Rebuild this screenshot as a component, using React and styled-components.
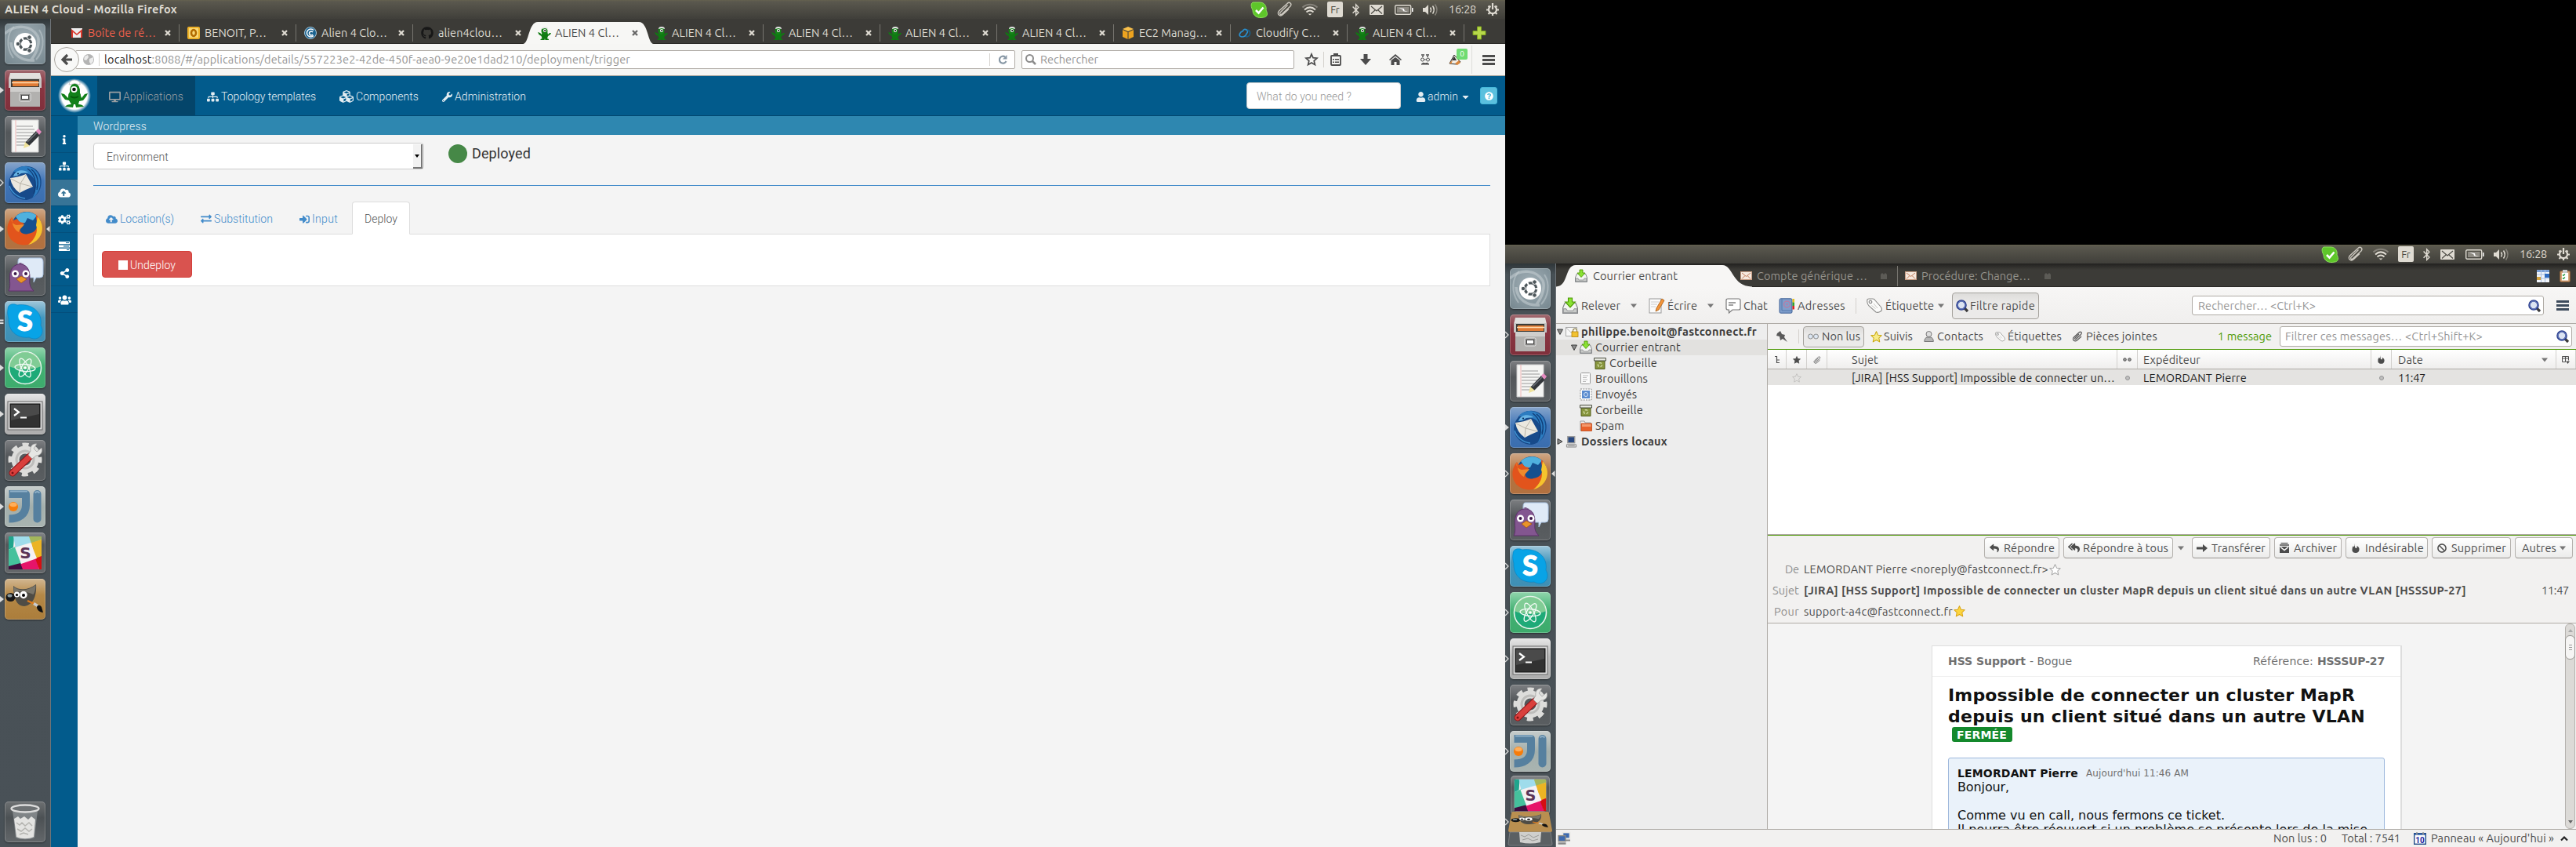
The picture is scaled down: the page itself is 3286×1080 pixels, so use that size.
import React, { useLayoutEffect, useRef, useState } from "react";
import styled, { createGlobalStyle, css } from "styled-components";
import {
  FaSitemap, FaCubes, FaWrench, FaUser, FaCaretDown, FaInfo, FaCloudUploadAlt, FaCogs,
  FaShareAlt, FaUsers, FaExchangeAlt, FaSignInAlt, FaQuestionCircle, FaGithub, FaReply,
  FaReplyAll, FaBan, FaDesktop, FaBluetoothB,
} from "react-icons/fa";

const ubuntu = `Ubuntu, "Noto Sans", "Open Sans", sans-serif`;
const roboto = `Roboto, "Liberation Sans", sans-serif`;
const dejavu = `"DejaVu Sans", Verdana, sans-serif`;

const GlobalStyle = createGlobalStyle`
  html, body { margin: 0; padding: 0; background: #000; overflow: hidden; }
  *, *::before, *::after { box-sizing: border-box; }
`;

/* ---------- shared parts ---------- */

const Label = styled.span`
  display: block;
  flex: none;
  width: ${(p) => p.$w}px;
  margin-left: ${(p) => p.$ml || 0}px;
  line-height: 20px;
  white-space: nowrap;
  ${(p) => p.$c && css`color: ${p.$c};`}
  ${(p) => p.$s && css`font-size: ${p.$s}px;`}
  ${(p) => p.$b && css`font-weight: 700;`}
`;

/* Text that spreads its letters so that it fills the width it is given. */
function Text({ w, ml, c, s, b, children }) {
  const ref = useRef(null);
  const [spacing, setSpacing] = useState(0);
  useLayoutEffect(() => {
    const natural = ref.current.getBoundingClientRect().width;
    setSpacing((w - natural) / String(children).length);
  }, [w, children]);
  return (
    <Label $w={w} $ml={ml} $c={c} $s={s} $b={b}>
      <span ref={ref} style={{ letterSpacing: spacing }}>{children}</span>
    </Label>
  );
}

const Svg = styled.svg`
  display: block;
  flex: none;
  overflow: visible;
  width: ${(p) => p.$w}px;
  height: ${(p) => p.$h || p.$w}px;
  margin-left: ${(p) => p.$ml || 0}px;
`;

const Glyph = styled.span`
  display: flex;
  flex: none;
  align-items: center;
  justify-content: center;
  width: ${(p) => p.$w}px;
  height: 20px;
  margin-left: ${(p) => p.$ml || 0}px;
  font-size: ${(p) => p.$s || p.$w}px;
  color: ${(p) => p.$c || "inherit"};
  svg { flex: none; }
`;

const Divider = styled.span`
  flex: none;
  width: 1px;
  height: ${(p) => p.$h}px;
  margin-left: ${(p) => p.$ml || 0}px;
  background: ${(p) => p.$c || "#d4d1cd"};
`;

const Arrow = ({ ml, w = 8, c = "#777" }) => (
  <Svg $w={w} $h={6} $ml={ml} viewBox="0 0 8 6"><path d="M0 0.5h8L4 5.5z" fill={c} /></Svg>
);

/* ---------- screens and top panel ---------- */

const Desktop = styled.div`
  display: grid;
  grid-template-columns: 1920px 1366px;
  width: 3286px;
  height: 1080px;
  overflow: hidden;
  background: #000;
  font-family: ${ubuntu};
  font-size: 14.5px;
`;

const Screen = styled.section`
  display: flex;
  flex-direction: column;
  height: ${(p) => p.$h}px;
  align-self: end;
  overflow: hidden;
`;

const PanelBar = styled.header`
  display: flex;
  flex: none;
  align-items: center;
  height: 24px;
  padding: 0 8px 0 6px;
  background: linear-gradient(#65624f 0, #5a584e 2px, #403f3a 100%);
  color: #dfdbd2;
`;

const Indicators = styled.div`
  display: flex;
  align-items: center;
  margin-left: auto;
`;

const Keyboard = styled.span`
  display: flex;
  align-items: center;
  justify-content: center;
  width: 20px;
  height: 20px;
  margin-left: 12px;
  border-radius: 2px;
  background: #dfdbd2;
  color: #4c4b45;
  font-size: 13px;
  line-height: 20px;
`;

const ScreenBody = styled.div`
  display: flex;
  flex: 1;
  min-height: 0;
`;

const Panel = ({ title }) => (
  <PanelBar>
    {title && <Text w={220} b>{title}</Text>}
    <Indicators>
      <Svg $w={21} viewBox="0 0 21 21">
        <path d="M2 1h9c6 0 9 5 8 10 3 5 1 9-3 9-8 2-14-2-14-9C0 7-1 3 2 1z" fill="#5ec62a" stroke="#8be05a" strokeWidth="1" />
        <path d="M6 11l3.500 3.500L15.500 7.500" fill="none" stroke="#fff" strokeWidth="2.600" />
      </Svg>
      <Svg $w={20} $ml={12} viewBox="0 0 20 20">
        <path d="M13.500 4.500L4 14c-1.300 1.500.6 3.300 2 2L17 6c2.500-3-1-6.500-4-3.500L2.500 12c-3 4 1 8 5 4.500L15 9.500" fill="none" stroke="#cfcbc2" strokeWidth="1.300" />
      </Svg>
      <Svg $w={20} $h={16} $ml={12} viewBox="0 0 20 16" fill="none" strokeWidth="2">
        <path d="M.5 5.500C6 .5 14 .5 19.500 5.500" stroke="#86837b" />
        <path d="M3 8.500c4.500-4 9.500-4 14 0M5.500 11.500c3-2.600 6-2.600 9 0" stroke="#dfdbd2" />
        <path d="M10 15.500l-2.500-2h5z" fill="#dfdbd2" />
      </Svg>
      <Keyboard>Fr</Keyboard>
      <Glyph $w={9} $ml={12} $s={17}><FaBluetoothB /></Glyph>
      <Svg $w={18} $h={13} $ml={13} viewBox="0 0 18 13">
        <rect width="18" height="13" rx="1" fill="#dfdbd2" />
        <path d="M2 2l7 6 7-6M2 11.500l5-4.500M16 11.500L11 7" fill="none" stroke="#4c4b45" strokeWidth="1.200" />
      </Svg>
      <Svg $w={24} $h={13} $ml={14} viewBox="0 0 24 13">
        <rect x=".7" y=".7" width="20" height="11.600" rx="1.500" fill="none" stroke="#dfdbd2" strokeWidth="1.400" />
        <rect x="3" y="3" width="15.500" height="7" fill="#8d8a82" />
        <path d="M22 4h1.500v5H22zM5 4l7 1 .5 2.500L17 9l-6-.8-.6-2z" fill="#fff" />
      </Svg>
      <Svg $w={19} $h={15} $ml={12} viewBox="0 0 19 15">
        <path d="M0 5h3l4-4v13l-4-4H0z" fill="#dfdbd2" />
        <path d="M9.500 4.500q2 3 0 6M12.500 2.500q3.500 5 0 10" fill="none" stroke="#dfdbd2" strokeWidth="1.500" />
        <path d="M15.500.5q5 7 0 14" fill="none" stroke="#86837b" strokeWidth="1.500" />
      </Svg>
      <Text w={35} ml={14}>16:28</Text>
      <Svg $w={16} $ml={13} viewBox="0 0 16 16" fill="none" stroke="#dfdbd2">
        <path d="M5.500 3.800a5 5 0 1 0 5 0M8 0v8" strokeWidth="2.200" />
        <path d="M2.500 3.500L4 5M13.500 3.500L12 5M0 8.500h3M13 8.500h3M2.500 14L4.500 12M13.500 14l-2-2M8 13v3" strokeWidth="2.200" />
      </Svg>
    </Indicators>
  </PanelBar>
);

/* ---------- launcher ---------- */

const LauncherBar = styled.nav`
  display: flex;
  flex: none;
  flex-direction: column;
  width: 65px;
  padding: 6px 0;
  gap: 7px;
  border-right: 1px solid #6f7478;
  background: linear-gradient(#2f3639 0, #475055 14px, #495157 100%);
`;

const LauncherItem = styled.div`
  display: flex;
  flex: none;
  align-items: center;
  justify-content: space-between;
  height: 52px;
  ${(p) => p.$last && css`margin-top: auto;`}
`;

const Folded = styled.div`
  display: flex;
  flex: none;
  align-items: center;
  height: ${(p) => p.$h}px;
  margin-top: ${(p) => p.$mt}px;
  gap: ${(p) => p.$gap || 0}px;
`;

const Tile = styled.div`
  flex: none;
  width: ${(p) => p.$w || 52}px;
  height: ${(p) => p.$h || 52}px;
  border-radius: 5px;
  background: ${(p) => p.$bg};
  box-shadow: inset 0 0 0 1px rgba(255, 255, 255, 0.22), 0 1px 2px rgba(0, 0, 0, 0.45);
  svg { display: block; width: 100%; height: 100%; }
`;

const Pip = ({ kind, right }) => (
  <Svg $w={6} $h={12} viewBox="0 0 6 12">
    {kind === "solid" && <path d={right ? "M5.500 2v8L1 6z" : "M0 2l5 4-5 4z"} fill="#dcdcdc" />}
    {kind === "open" && <path d="M0 2l4 4-4 4" fill="none" stroke="#dcdcdc" strokeWidth="1.300" />}
    {kind === "many" && <path d="M0 3.500h4.500v2H0zM0 7h4.500v2H0z" fill="#dcdcdc" />}
  </Svg>
);

const GimpArt = () => (
  <g>
    <path d="M11 9c6 6 19 6 29-2 1 14-3 26-15 28-9 0-14-9-14-26z" fill="#4f4c45" />
    <path d="M11.500 10c6 6 18 6 28-2 0 5-1 9-3 12-8-4-18-5-25-2z" fill="#79756a" />
    <ellipse cx="7.500" cy="23.500" rx="6" ry="5.500" fill="#171717" />
    <ellipse cx="6.500" cy="21.500" rx="3" ry="2" fill="#8a9ba0" />
    <circle cx="15.500" cy="20" r="3.500" fill="#fff" /><circle cx="15.500" cy="20.500" r="1.600" />
    <circle cx="24" cy="20.500" r="4.700" fill="#fff" /><circle cx="24" cy="21" r="2" />
    <path d="M29 28l11 5" stroke="#e07b1c" strokeWidth="2.400" />
    <path d="M37 31.500l5 3" stroke="#c9cdd0" strokeWidth="3.500" />
    <path d="M41 36c1-3 4-3 6 0l2 7c-4 0-8-3-8-7z" fill="#111" />
  </g>
);

const TrashArt = () => (
  <g>
    <path d="M10 11l4 35c6 3 18 3 24 0l4-35z" fill="#b8bcbe" opacity=".45" />
    <path d="M12 22l5-3 3 3 5-3 5 4 4-4 5 4-2 22c-6 3-16 3-22 0z" fill="#e3e3e1" />
    <path d="M15 27l4 3 3-3 4 4 5-4 4 4M16 35l5 3 5-4 5 4 4-3M19 42l5-2 6 2" fill="none" stroke="#b4b4b0" strokeWidth="1.500" />
    <ellipse cx="26" cy="9" rx="17.500" ry="4.500" fill="#6e7274" stroke="#dcdcdc" strokeWidth="2.400" />
  </g>
);

const tiles = [
  {
    bg: "radial-gradient(circle at 50% 40%, #a3b1b8, #75868e)",
    art: <g>
      <path d="M0 13C14 0 34 2 42 16c3 7 0 20-8 30M8 24C9 40 22 48 38 47" fill="none" stroke="#c6d0d4" strokeWidth="3.500" opacity=".55" />
      <path d="M12 4C3 12 1 30 11 44M44 8c8 12 5 28-4 38" fill="none" stroke="#c6d0d4" strokeWidth="2" opacity=".5" />
      <circle cx="26" cy="26" r="14" fill="#fff" />
      <circle cx="26.500" cy="26" r="7.200" fill="none" stroke="#4d565a" strokeWidth="3.200" strokeDasharray="13 2.080" strokeDashoffset="-1" />
      <g fill="#4d565a" stroke="#fff" strokeWidth="1"><circle cx="17" cy="26" r="2.800" /><circle cx="31.500" cy="17.600" r="2.800" /><circle cx="31.500" cy="34.400" r="2.800" /></g>
    </g>,
  },
  {
    bg: "linear-gradient(#a06a70, #8b3642 35%, #7f2f3b)",
    art: <g>
      <path d="M7 4h38l2 8H5z" fill="#e1e0de" />
      <path d="M5 11h42v12H5z" fill="#c6c5c3" />
      <path d="M8 12h36v10H8z" fill="#3c3c38" />
      <path d="M10 14h33v7H10z" fill="#e07b35" /><path d="M9 16.500h35" stroke="#ffd9ae" strokeWidth="1.500" />
      <path d="M7 22h38v25H7z" fill="#b2b1af" /><path d="M7 22h38v6H7z" fill="#cfcecc" />
      <rect x="19" y="30" width="14" height="10" rx="1.500" fill="#8e8d8b" stroke="#e8e8e8" />
      <rect x="21.500" y="32.500" width="9" height="5" fill="#fff" stroke="#444" />
    </g>,
  },
  {
    bg: "linear-gradient(#7d7f82, #53575a 40%, #5c6063)",
    art: <g>
      <path d="M9 5h34v41H9z" fill="#f5f5f3" stroke="#ccc" />
      <path d="M14 5v41" stroke="#f0b6b6" />
      <path d="M15 13h21M15 17h23M15 21h22M15 25h23M15 29h20M15 33h17M15 37h13" stroke="#9a9a9a" />
      <path d="M26 34l14-15 5 5-14 14z" fill="#33363a" /><path d="M29 33l13-13" stroke="#6c7076" strokeWidth="1.500" />
      <path d="M26 33l6 5-8 3z" fill="#efe29a" /><path d="M40 19l3-3 4 4-3 4z" fill="#e58bc0" />
    </g>,
  },
  {
    bg: "linear-gradient(#87a5cb, #4176b8 45%, #3a6dae)",
    art: <g>
      <path d="M10 14C17 2 38 1 45 16c5 13-1 29-17 32-10 0-19-6-22-15-2-7 0-14 4-19z" fill="#174a8a" />
      <path d="M11 12C20 1 37 4 43 15c5 11 2 24-8 31 6-9 6-21 0-28-5-5-13-6-24-6z" fill="#2c7cc0" />
      <path d="M34 9c8 6 10 16 7 26M29 8c9 6 13 18 8 32M38 13c5 7 5 14 3 20" fill="none" stroke="#103d77" strokeWidth="1.300" />
      <path d="M7 20q11-1 20-5l9 16q-10 4-17 8Q9 32 7 20z" fill="#ebe8df" />
      <path d="M8 21l12 6 7-11M20 27l-1 11M20 27l15 4" fill="none" stroke="#b9b5a9" />
      <path d="M6 30c3 9 11 15 20 16" fill="none" stroke="#3f90d0" strokeWidth="1.500" />
      <path d="M11 18c2-8 12-10 19-5l-9 1-5 3z" fill="#68b4e4" /><circle cx="17" cy="14.500" r="1.100" fill="#062b55" />
    </g>,
  },
  {
    bg: "linear-gradient(#cfa887, #b2733f 45%, #b27140)",
    art: <g>
      <circle cx="28" cy="23" r="19" fill="#15508f" />
      <path d="M14 10c7-7 19-8 27-1l-5 6-7-3-3 6-6 1z" fill="#4fb1de" />
      <path d="M40 8c8 7 9 19 4 28-9 14-29 13-37 2-6-9-4-20 2-27l2 4 5-2c2 4 5 5 9 5l-5 5c-3 7 4 11 10 9 9-1 13-8 11-15-1-4-1-6-1-9z" fill="#e2541c" />
      <path d="M42 10c7 8 8 19 2 27-4 5-9 8-14 9 9-7 13-17 10-25z" fill="#f6c32d" />
      <path d="M9 11c-2 6 2 9 6 10l10-1c-2 4-6 5-7 10-5-2-9-9-9-19z" fill="#f08a2c" />
    </g>,
  },
  {
    bg: "linear-gradient(#7d7f82, #53575a 40%, #5a5e61)",
    art: <g>
      <path d="M20 4h25q4 0 4 5v16q0 4-4 4h-5l-3 6v-6H23q-6-1-6-6V9q0-5 3-5z" fill="#dfeaf7" stroke="#a9c3e3" />
      <path d="M5 46c4-8-1-17 3-26C12 9 28 9 31 21c3 10-3 16 6 25z" fill="#835690" stroke="#5c3169" />
      <path d="M17 11l8 1-5-2z" fill="#5c3169" />
      <circle cx="13.500" cy="24" r="4.500" fill="#fff" /><circle cx="27" cy="24" r="4.500" fill="#fff" />
      <circle cx="13.500" cy="24" r="2" fill="#3c1849" /><circle cx="27" cy="24" r="2" fill="#3c1849" />
      <path d="M15 31l6-4 7 4-7 5z" fill="#ea9428" stroke="#9c5310" strokeWidth=".7" />
    </g>,
  },
  {
    bg: "linear-gradient(#a0c7da, #4397bd 40%, #3f8fb4)",
    art: <g>
      <path d="M4 10C4 3 12 3 16 5c18-3 33 9 30 26 4 6 2 16-7 17-4 0-6-1-8-2C16 48 4 38 5 22c-1-3-2-7-1-12z" fill="#08a3e6" stroke="#067fc0" strokeWidth=".6" />
      <text x="26" y="38" textAnchor="middle" fontFamily="Lato, sans-serif" fontWeight="900" fontSize="36" fill="#fff" stroke="#fff">S</text>
    </g>,
  },
  {
    bg: "linear-gradient(#91d5ac, #41b072 45%, #3dab6c)",
    art: <g>
      <circle cx="26" cy="26" r="20.500" fill="#1eaa78" stroke="#e8f5ee" strokeWidth="1.600" />
      <path d="M6 24C8 0 44 0 46 24c-10 5-30 5-40 0z" fill="#b5dfa4" opacity=".65" />
      <g fill="none" stroke="#f2fbf6" strokeWidth="1.300">
        <ellipse cx="26" cy="26" rx="13" ry="4.500" transform="rotate(5 26 26)" />
        <ellipse cx="26" cy="26" rx="13" ry="4.500" transform="rotate(63 26 26)" />
        <ellipse cx="26" cy="26" rx="13" ry="4.500" transform="rotate(122 26 26)" />
      </g>
      <circle cx="26" cy="26" r="1.800" fill="#fff" />
    </g>,
  },
  {
    bg: "linear-gradient(#e6e6e6, #b9b9b9 45%, #adadad)",
    art: <g>
      <rect x="4" y="10" width="44" height="36" fill="#dedede" stroke="#777" strokeWidth="1.200" />
      <rect x="7" y="13" width="38" height="30" fill="#313131" stroke="#111" />
      <path d="M8 14h36v12L8 34z" fill="#4a4a4a" />
      <path d="M12 19l6 4.500-6 4.500" fill="none" stroke="#fff" strokeWidth="2.200" /><path d="M20 30.500h8" stroke="#fff" strokeWidth="2" />
    </g>,
  },
  {
    bg: "linear-gradient(#7d7f82, #53575a 40%, #5a5e61)",
    art: <g>
      <circle cx="26" cy="25" r="12.500" fill="none" stroke="#dddddb" strokeWidth="10" />
      <circle cx="26" cy="25" r="19" fill="none" stroke="#dddddb" strokeWidth="5" strokeDasharray="8 6.920" strokeDashoffset="4" />
      <circle cx="26" cy="25" r="11" fill="none" stroke="#bdbdbb" strokeWidth="3" />
      <path d="M10 42l22-21" stroke="#8f1318" strokeWidth="9" strokeLinecap="round" />
      <path d="M10 42l22-21" stroke="#d93f3c" strokeWidth="7" strokeLinecap="round" />
      <circle cx="10" cy="42" r="1.500" fill="#7c1014" />
      <path d="M30 19l5 5 5-4c6 0 9-5 7-10l-6 5-4-4 4-6c-6-1-9 4-8 9z" fill="#e6e6e4" stroke="#999" strokeWidth=".7" />
    </g>,
  },
  {
    bg: "linear-gradient(#c7cdcc, #a3afac 50%, #a9b4b1)",
    art: <g>
      <g fill="none" stroke="#56809f" strokeWidth="10">
        <path d="M5.500 10H27V24C27 36 18 41.500 5.500 41.500" strokeLinejoin="round" />
        <path d="M41.500 10v31.500" strokeLinecap="round" />
      </g>
      <path d="M7 6.500h22M38.500 8.500q3-3 6 0" fill="none" stroke="#8fb0c8" strokeWidth="1.800" />
      <circle cx="11" cy="26" r="6" fill="#f77c0a" /><ellipse cx="11" cy="23.500" rx="4.500" ry="2.800" fill="#ffae5a" />
    </g>,
  },
  {
    bg: "linear-gradient(#85878a, #53575a 30%, #65686b)",
    art: <g>
      <rect x="5" y="5" width="42" height="42" rx="2" fill="#f3eef0" />
      <path d="M5 5h7l-1 14-6 3z" fill="#20a58d" />
      <path d="M11 5h21l2 9-20 6z" fill="#9fdceb" /><path d="M31 5h16v4l-13 5z" fill="#a3b75b" />
      <path d="M34 13l13-4v22l-8 2z" fill="#ecb424" /><path d="M5 22l9-4 8 22-17 6z" fill="#45c19c" />
      <path d="M20 40l20-8 4 15H22z" fill="#e61469" /><path d="M39 33l8-3v17h-3z" fill="#d60f12" /><path d="M5 43l15-4 3 8H5z" fill="#3f0e3f" />
      <path d="M13 19l20-6 8 20-20 7z" fill="#f5f1f3" />
      <text x="26.500" y="33" textAnchor="middle" fontFamily="DejaVu Sans, sans-serif" fontWeight="700" fontSize="20" fill="#5b3558">S</text>
    </g>,
  },
  { bg: "linear-gradient(#d2b792, #b58846 40%, #ab7d3b)", art: <GimpArt /> },
];

const AppTile = ({ n, w, h }) => (
  <Tile $bg={tiles[n].bg} $w={w} $h={h}>
    <svg viewBox="0 0 52 52" preserveAspectRatio="none">{tiles[n].art}</svg>
  </Tile>
);

const trashBg = "linear-gradient(#6d7072, #4c5154 40%, #63676a)";

function Launcher({ pips, folded }) {
  const full = folded ? tiles.slice(0, 11) : tiles;
  return (
    <LauncherBar>
      {full.map((_, n) => (
        <LauncherItem key={n}>
          <Pip kind={pips[n]} />
          <AppTile n={n} />
          <Pip kind={n === 4 ? "solid" : ""} right />
        </LauncherItem>
      ))}
      {folded ? (
        <>
          <Folded $h={50} $mt={-2} $gap={1}><Pip /><AppTile n={11} w={50} h={50} /></Folded>
          <Folded $h={26} $mt={-11}>
            <Pip kind="open" />
            <Svg $w={56} $h={26} $ml={-2} viewBox="0 0 56 26">
              <path d="M6 0h44q2 0 2 2l4 22q0 2-2 2H2q-2 0-2-2L4 2q0-2 2-2z" fill="#b98f50" />
              <g transform="translate(2 0) scale(1 .46)"><GimpArt /></g>
            </Svg>
          </Folded>
          <Folded $h={17} $mt={-7}>
            <Svg $w={56} $h={17} $ml={4} viewBox="0 0 56 17">
              <path d="M2 0h52l2 15q0 2-2 2H2q-2 0-2-2z" fill="#5b6063" stroke="#8a8e90" strokeWidth=".7" />
              <path d="M14 0h28l-1 13q-13 3-26 0z" fill="#cfcfcd" />
              <path d="M16 4l5 2 5-3 6 4 7-3M18 10l7-2 6 3 7-2" fill="none" stroke="#9b9b98" />
            </Svg>
          </Folded>
        </>
      ) : (
        <LauncherItem $last>
          <Pip />
          <Tile $bg={trashBg}><svg viewBox="0 0 52 52"><TrashArt /></svg></Tile>
          <Pip />
        </LauncherItem>
      )}
    </LauncherBar>
  );
}

/* ---------- browser chrome ---------- */

const Window = styled.main`
  display: flex;
  flex: 1;
  flex-direction: column;
  min-width: 0;
`;

const TabStrip = styled.div`
  display: flex;
  flex: none;
  height: 32px;
  padding-left: 15px;
  border-bottom: 1px solid #2a2926;
  background: #3c3b37;
  color: #dfdbd2;
`;

const BrowserTab = styled.div`
  position: relative;
  display: flex;
  flex: none;
  align-items: center;
  width: 149px;
  padding: 5px 0 0 10px;
  ${(p) => p.$active && css`color: #4c4c4c; z-index: 1;`}
  ${(p) => p.$line && css`
    background: linear-gradient(#77756f, #77756f) 100% 7px / 1px 22px no-repeat;
  `}
`;

const TabShape = styled.svg`
  position: absolute;
  left: -9px;
  top: 4px;
  width: 167px;
  height: 28px;
  z-index: -1;
`;

const AlienBody = () => (
  <g>
    <path d="M0 7l3 1 2 2 1-4q4-3 6 0l1 4 2-2 2 0-1 2-3 2-1 3 2 1v1H9.500l-.5-2-.5 2H3.500v-1l2-1-1-3-3-2z" fill="#0f7a12" />
    <ellipse cx="8.500" cy="5.500" rx="4" ry="4.500" fill="#158218" />
    <path d="M5 3q0-3 4-3t4 3l-4-1z" fill="#e9e9e9" />
    <circle cx="9" cy="5" r="2" fill="#fff" /><circle cx="9.200" cy="5" r="1.100" fill="#111" />
  </g>
);

const favicons = {
  gmail: <g><path d="M1 2h14v12H1z" fill="#eee" /><path d="M1 14V3l7 6 7-6v11h-2V7l-5 4-5-4v7z" fill="#d9372b" /></g>,
  outlook: <g><rect width="16" height="16" rx="2" fill="#efb229" /><rect x="2" y="2" width="12" height="12" fill="#f9d977" /><ellipse cx="8" cy="8" rx="3" ry="4" fill="none" stroke="#b26a00" strokeWidth="2.500" /></g>,
  cfy: <g><circle cx="8" cy="8" r="7.500" fill="#1b6390" stroke="#a8c7da" /><path d="M12 4.500a5 5 0 1 0 0 7M11 7a2.500 2.500 0 1 0 0 3" fill="none" stroke="#fff" strokeWidth="1.500" /></g>,
  alien: <AlienBody />,
  cube: <g><path d="M8 0l7 3-7 3-7-3z" fill="#fac14b" /><path d="M1 4l6.500 3v9L1 13zM15 4L8.500 7v9l6.500-3z" fill="#eda31f" /></g>,
  cloud: <g fill="none" strokeWidth="1.700"><path d="M4 13q-4-1-2.500-4T5 6q2-4 5-2t0 5q-1 4-6 4z" stroke="#2a8fce" /><path d="M11 4q4 1 3.500 5T9 13" stroke="#1b5e88" /></g>,
};

const tabs = [
  ["gmail", "Boîte de ré…", 87, "#ec5f4c"],
  ["outlook", "BENOIT, P…", 79],
  ["cfy", "Alien 4 Clo…", 84],
  ["github", "alien4clou…", 82],
  ["alien", "ALIEN 4 Cl…", 82],
  ["alien", "ALIEN 4 Cl…", 82],
  ["alien", "ALIEN 4 Cl…", 82],
  ["alien", "ALIEN 4 Cl…", 82],
  ["alien", "ALIEN 4 Cl…", 82],
  ["cube", "EC2 Manag…", 87],
  ["cloud", "Cloudify C…", 82],
  ["alien", "ALIEN 4 Cl…", 82],
];

const Toolbar = styled.div`
  display: flex;
  flex: none;
  align-items: center;
  height: 41px;
  padding-left: 4px;
  border-bottom: 1px solid #a9a49c;
  background: #f6f6f4;
  color: #4c4c4c;
`;

const BackButton = styled.div`
  z-index: 1;
  display: flex;
  align-items: center;
  justify-content: center;
  flex: none;
  width: 32px;
  height: 32px;
  border: 1px solid #aaa69f;
  border-radius: 50%;
  background: #f8f8f7;
`;

const Field = styled.div`
  display: flex;
  flex: none;
  align-items: center;
  width: ${(p) => p.$w}px;
  height: ${(p) => p.$h || 24}px;
  margin-left: ${(p) => p.$ml || 0}px;
  padding-left: ${(p) => p.$pl || 0}px;
  border: 1px solid #afaba5;
  border-radius: ${(p) => p.$r || 2}px;
  background: #fff;
  color: #969696;
`;

const Url = styled.span`
  b { font-weight: 400; color: #222; }
`;

const BadgeIcon = styled.div`
  position: relative;
  flex: none;
  width: 16px;
  height: 16px;
  margin-left: 23px;
`;

const Badge = styled.span`
  position: absolute;
  left: 10px;
  top: -6px;
  width: 14px;
  height: 14px;
  border-radius: 2px;
  background: #6fdc72;
  color: #fff;
  font-size: 10px;
  line-height: 14px;
  text-align: center;
`;

function UrlText() {
  const ref = useRef(null);
  const [spacing, setSpacing] = useState(0);
  useLayoutEffect(() => {
    setSpacing((671 - ref.current.getBoundingClientRect().width) / ref.current.textContent.length);
  }, []);
  return (
    <Label $w={671} $ml={6}>
      <Url ref={ref} style={{ letterSpacing: spacing }}>
        <b>localhost</b>:8088/#/applications/details/557223e2-42de-450f-aea0-9e20e1dad210/deployment/trigger
      </Url>
    </Label>
  );
}

function BrowserTabs() {
  return (
    <TabStrip>
      {tabs.map(([icon, text, w, color], i) => (
        <BrowserTab key={i} $active={i === 4} $line={i !== 3 && i !== 4}>
          {i === 4 && (
            <TabShape viewBox="0 0 167 28"><path d="M0 28C8 28 7 0 19 0H148C160 0 159 28 167 28z" fill="#f7f7f5" /></TabShape>
          )}
          {icon === "github"
            ? <Glyph $w={16} $c="#171717"><FaGithub /></Glyph>
            : <Svg $w={16} viewBox="0 0 16 16">{favicons[icon]}</Svg>}
          <Text w={w} ml={6} c={color}>{text}</Text>
          <Svg $w={8} $ml={98 - w} viewBox="0 0 8 8">
            <path d="M1 1l6 6M7 1L1 7" stroke={i === 4 ? "#666" : "#dfdbd2"} strokeWidth="2.300" />
          </Svg>
        </BrowserTab>
      ))}
      <Svg $w={16} $h={31} $ml={11} viewBox="0 -10 16 31"><path d="M5.500 0h5v5.500H16v5h-5.500V16h-5v-5.500H0v-5h5.500z" fill="#b7d84a" stroke="#7fa51e" /></Svg>
    </TabStrip>
  );
}

const BrowserToolbar = () => (
  <Toolbar>
    <BackButton>
      <Svg $w={16} viewBox="0 0 16 16"><path d="M15 8H4M9 2L3 8l6 6" fill="none" stroke="#4c4c4c" strokeWidth="3.200" /></Svg>
    </BackButton>
    <Field $w={1199} $ml={-5} $pl={9}>
      <Svg $w={14} viewBox="0 0 14 14">
        <circle cx="7" cy="7" r="7" fill="#b4b4b4" /><path d="M2 3l4-2 1 3-3 4-3-1zM8 6l5-2v5l-3 4-2-3z" fill="#fff" opacity=".75" />
      </Svg>
      <Divider $h={16} $ml={6} />
      <UrlText />
      <Divider $h={16} $ml={458} />
      <Svg $w={12} $ml={10} viewBox="0 0 12 12"><path d="M9 2.500A4.500 4.500 0 1 0 10.500 8" fill="none" stroke="#8797a5" strokeWidth="2.200" /><path d="M11.500 0v5.500H6z" fill="#8797a5" /></Svg>
    </Field>
    <Field $w={348} $ml={8} $pl={4}>
      <Svg $w={14} viewBox="0 0 14 14"><circle cx="5.500" cy="5.500" r="4.500" fill="none" stroke="#8c8c8c" strokeWidth="2" /><path d="M9 9l4 4" stroke="#8c8c8c" strokeWidth="2.500" /></Svg>
      <Text w={74} ml={5}>Rechercher</Text>
    </Field>
    <Svg $w={16} $ml={14} viewBox="0 0 16 16"><path d="M8 1l2 4.700 5 .5-3.800 3.300 1.200 5L8 12l-4.400 2.500 1.200-5L1 6.200l5-.5z" fill="none" stroke="#4c4c4c" strokeWidth="1.700" /></Svg>
    <Divider $h={20} $ml={7} />
    <Svg $w={14} $h={16} $ml={8} viewBox="0 0 14 16"><rect x="1" y="3" width="12" height="12" rx="1" fill="none" stroke="#4c4c4c" strokeWidth="1.800" /><path d="M4 0h6v4H4zM3 7h2v1.500H3zM3 10.500h2V12H3zM6 7h5v1.500H6zM6 10.500h5V12H6z" fill="#4c4c4c" /></Svg>
    <Svg $w={14} $ml={24} viewBox="0 0 14 14"><path d="M4.500 0h5v6H14l-7 8-7-8h4.500z" fill="#4c4c4c" /></Svg>
    <Svg $w={16} $h={14} $ml={23} viewBox="0 0 16 14"><path d="M0 7l8-7 8 7-1 1-7-5.500L1 8zM2.500 8L8 4l5.500 4v6h-4v-4h-3v4h-4z" fill="#4c4c4c" /></Svg>
    <Svg $w={14} $ml={23} viewBox="0 0 14 14">
      <path d="M2 1h4M8 1h4M3 3h2M9 3h2" stroke="#4c4c4c" strokeWidth="1.400" />
      <circle cx="3.500" cy="7" r="2" fill="none" stroke="#4c4c4c" /><circle cx="10.500" cy="7" r="2" fill="none" stroke="#4c4c4c" />
      <path d="M5.500 7h3M2 13q2.500-3 5-1 2.500-2 5 1z" stroke="#4c4c4c" fill="#4c4c4c" />
    </Svg>
    <BadgeIcon>
      <Svg $w={16} viewBox="0 0 16 16"><path d="M1 13L7 2l8 9-5 3z" fill="#f4eee4" stroke="#2d2d2d" /><path d="M4 9l3-5 3 5z" fill="#333" /><path d="M8 13l5-4 2 3-4 3zM1 12l4-3-2 5z" fill="#dc873c" /></Svg>
      <Badge>0</Badge>
    </BadgeIcon>
    <Divider $h={36} $ml={13} $c="#deddda" />
    <Svg $w={16} $h={13} $ml={13} viewBox="0 0 16 13"><path d="M0 1.500h16M0 6.500h16M0 11.500h16" stroke="#4c4c4c" strokeWidth="3" /></Svg>
  </Toolbar>
);

/* ---------- web application ---------- */

const AppHeader = styled.div`
  display: flex;
  flex: none;
  align-items: center;
  height: 51px;
  border-bottom: 1px solid #024770;
  background: #025b8c;
  color: #e4edf2;
  font: 300 14px ${roboto};
`;

const LogoBox = styled.div`
  display: flex;
  align-items: center;
  justify-content: center;
  flex: none;
  width: 59px;
  height: 50px;
`;

const MenuEntry = styled.div`
  display: flex;
  flex: none;
  align-items: center;
  height: 50px;
  padding: 2px 15px 0;
  ${(p) => p.$active && css`
    background: #04456a;
    color: #9a9fa2;
  `}
`;

const SearchBox = styled.div`
  display: flex;
  flex: none;
  align-items: center;
  width: 197px;
  height: 34px;
  margin-left: auto;
  padding: 1px 0 0 12px;
  border: 1px solid #ccc;
  border-radius: 4px;
  background: #fff;
  color: #999;
`;

const UserMenu = styled.div`
  display: flex;
  align-items: center;
  padding: 2px 0 0 20px;
`;

const HelpButton = styled.div`
  display: flex;
  flex: none;
  align-items: center;
  justify-content: center;
  width: 22px;
  height: 22px;
  margin: 0 10px 0 15px;
  border: 1px solid #46b8da;
  border-radius: 3px;
  background: #5bc0de;
  color: #fff;
  font-size: 11px;
`;

const AppBody = styled.div`
  display: flex;
  flex: 1;
  min-height: 0;
  background: #f4f4f4;
  font: 300 14px ${roboto};
`;

const SideNav = styled.div`
  flex: none;
  width: 34px;
  padding-top: 13px;
  background: #025b8c;
`;

const SideItem = styled.div`
  display: flex;
  align-items: center;
  justify-content: center;
  height: 34px;
  padding-top: 1px;
  border-bottom: 1px solid #034f7c;
  background: ${(p) => (p.$active ? "#377497" : "transparent")};
  color: #fff;
  font-size: ${(p) => p.$s || 14}px;
`;

const Page = styled.div`
  flex: 1;
  min-width: 0;
`;

const Crumb = styled.div`
  display: flex;
  align-items: center;
  height: 24px;
  padding: 2px 0 0 20px;
  background: #2e87b0;
  color: #e4edf2;
`;

const Content = styled.div`
  padding: 10px 19px 0 20px;
`;

const StatusRow = styled.div`
  display: flex;
  align-items: flex-start;
  height: 55px;
  border-bottom: 1px solid #428bca;
`;

const Select = styled.div`
  display: flex;
  align-items: center;
  justify-content: space-between;
  width: 422px;
  height: 34px;
  padding: 1px 1px 0 16px;
  border: 1px solid #ccc;
  border-radius: 4px;
  background: #fff;
  color: #555;
`;

const SelectKnob = styled.div`
  display: flex;
  align-items: center;
  justify-content: center;
  width: 12px;
  height: 31px;
  border-right: 2px solid #777;
  border-bottom: 2px solid #777;
  background: #f2f2f2;
`;

const Status = styled.div`
  display: flex;
  align-items: center;
  height: 24px;
  margin: 2px 0 0 31px;
  font-weight: 400;
  font-size: 18px;
  color: #333;
`;

const Dot = styled.span`
  width: 24px;
  height: 24px;
  margin-right: 6px;
  border-radius: 50%;
  background: #468847;
`;

const StepTabs = styled.div`
  display: flex;
  height: 42px;
  margin: 20px 0 -1px;
`;

const StepTab = styled.div`
  display: flex;
  align-items: center;
  margin-right: 2px;
  padding: 2px 15px 0;
  border: 1px solid transparent;
  border-radius: 4px 4px 0 0;
  color: #428bca;
  ${(p) => p.$active && css`
    position: relative;
    border-color: #ddd #ddd #fff;
    background: #fff;
    color: #555;
  `}
`;

const StepPanel = styled.div`
  height: 67px;
  padding: 21px 10px;
  border: 1px solid #ddd;
  background: #fff;
`;

const DangerButton = styled.div`
  display: flex;
  align-items: center;
  width: 115px;
  height: 34px;
  padding: 2px 0 0 20px;
  border: 1px solid #d43f3a;
  border-radius: 4px;
  background: #d9534f;
  color: #fff;
`;

const StopSquare = styled.span`
  width: 12px;
  height: 12px;
  background: #fff;
`;

const Logo = () => (
  <Svg $w={42} $h={44} viewBox="0 0 42 44">
    <defs>
      <radialGradient id="glow"><stop offset=".78" stopColor="#fff" /><stop offset="1" stopColor="#fff" stopOpacity="0" /></radialGradient>
    </defs>
    <ellipse cx="21" cy="22" rx="21" ry="22" fill="url(#glow)" />
    <path d="M4 19l4 1 5 5 2-6q-1-11 6-13 8 2 7 13l2 6 4-5 4-1-2 4-4 5-5 1-1 4q5 0 7 3l-10 1-1-4h-2l-1 4-10-1q2-3 8-3l-3-5-5-1-4-5z" fill="#12801a" />
    <ellipse cx="21" cy="23" rx="8" ry="9" fill="#12801a" />
    <path d="M14 8q1-6 7-6 8 1 7 6-6-3-14 0z" fill="#fff" stroke="#bbb" strokeWidth=".7" />
    <circle cx="20.500" cy="14" r="4" fill="#fff" /><circle cx="20.500" cy="14" r="2.300" fill="#111" />
    <path d="M16 23q5 3 10 0" stroke="#065c0c" strokeWidth="2" fill="none" />
  </Svg>
);

const WebApp = () => (
  <>
    <AppHeader>
      <LogoBox><Logo /></LogoBox>
      <MenuEntry $active><Glyph $w={15}><FaDesktop /></Glyph><Text w={77} ml={3}>Applications</Text></MenuEntry>
      <MenuEntry><Glyph $w={15}><FaSitemap /></Glyph><Text w={121} ml={3}>Topology templates</Text></MenuEntry>
      <MenuEntry><Glyph $w={18}><FaCubes /></Glyph><Text w={80} ml={3}>Components</Text></MenuEntry>
      <MenuEntry><Glyph $w={13}><FaWrench /></Glyph><Text w={91} ml={3}>Administration</Text></MenuEntry>
      <SearchBox><Text w={121}>What do you need ?</Text></SearchBox>
      <UserMenu>
        <Glyph $w={11} $s={13}><FaUser /></Glyph>
        <Text w={39} ml={3}>admin</Text>
        <Glyph $w={8} $s={13} $ml={5}><FaCaretDown /></Glyph>
      </UserMenu>
      <HelpButton><FaQuestionCircle /></HelpButton>
    </AppHeader>
    <AppBody>
      <SideNav>
        <SideItem $s={12}><FaInfo /></SideItem>
        <SideItem><FaSitemap /></SideItem>
        <SideItem $active $s={16}><FaCloudUploadAlt /></SideItem>
        <SideItem $s={16}><FaCogs /></SideItem>
        <SideItem>
          <Svg $w={14} $h={12} viewBox="0 0 14 12"><path d="M0 0h14v3.200H0zM0 4.400h14v3.200H0zM0 8.800h14V12H0z" fill="#fff" /><path d="M9 1.600h4M6 6h7M10 10.400h3" stroke="#025b8c" strokeWidth="1" /></Svg>
        </SideItem>
        <SideItem $s={13}><FaShareAlt /></SideItem>
        <SideItem $s={17}><FaUsers /></SideItem>
      </SideNav>
      <Page>
        <Crumb><Text w={68}>Wordpress</Text></Crumb>
        <Content>
          <StatusRow>
            <Select>
              <Text w={79}>Environment</Text>
              <SelectKnob><Svg $w={6} $h={4} viewBox="0 0 6 4"><path d="M0 0h6L3 4z" /></Svg></SelectKnob>
            </Select>
            <Status><Dot /><Text w={75}>Deployed</Text></Status>
          </StatusRow>
          <StepTabs>
            <StepTab><Glyph $w={15}><FaCloudUploadAlt /></Glyph><Text w={69} ml={3}>Location(s)</Text></StepTab>
            <StepTab><Glyph $w={14}><FaExchangeAlt /></Glyph><Text w={75} ml={3}>Substitution</Text></StepTab>
            <StepTab><Glyph $w={13}><FaSignInAlt /></Glyph><Text w={33} ml={3}>Input</Text></StepTab>
            <StepTab $active><Text w={42}>Deploy</Text></StepTab>
          </StepTabs>
          <StepPanel><DangerButton><StopSquare /><Text w={58} ml={3}>Undeploy</Text></DangerButton></StepPanel>
        </Content>
      </Page>
    </AppBody>
  </>
);

/* ---------- mail client ---------- */

const MailTabs = styled.div`
  display: flex;
  flex: none;
  align-items: center;
  height: 30px;
  padding-top: 2px;
  border-bottom: 1px solid #2a2926;
  background: linear-gradient(#22211f, #3c3b37 8px);
  color: #96938c;
`;

const MailTabActive = styled.div`
  position: relative;
  z-index: 0;
  display: flex;
  flex: none;
  align-items: center;
  width: 235px;
  height: 28px;
  padding-left: 24px;
  color: #4c4c4c;
`;

const MailTabShape = styled.svg`
  position: absolute;
  left: 0;
  top: 0;
  width: 250px;
  height: 28px;
  z-index: -1;
`;

const MailToolbar = styled.div`
  display: flex;
  flex: none;
  align-items: center;
  height: 47px;
  padding: 1px 0 0 8px;
  border-bottom: 1px solid #afaba6;
  background: linear-gradient(#f7f6f5, #f0efee);
  color: #4c4c4c;
`;

const Pressed = styled.div`
  display: flex;
  flex: none;
  align-items: center;
  width: ${(p) => p.$w}px;
  height: ${(p) => p.$h}px;
  margin-left: ${(p) => p.$ml}px;
  padding-left: 5px;
  border: 1px solid #a5a29d;
  border-radius: 4px;
  background: linear-gradient(#dddcda, #ebeae9 40%);
`;

const MailBody = styled.div`
  display: flex;
  flex: 1;
  min-height: 0;
`;

const Tree = styled.aside`
  flex: none;
  width: 270px;
  border-right: 1px solid #afaba6;
  background: #ededed;
  color: #3c3c3c;
`;

const TreeRow = styled.div`
  display: flex;
  align-items: center;
  height: 20px;
  padding-left: ${(p) => p.$pl}px;
  ${(p) => p.$selected && css`background: #e2e1df;`}
`;

const MailPane = styled.div`
  display: flex;
  flex: 1;
  flex-direction: column;
  min-width: 0;
  color: #4c4c4c;
`;

const FilterBar = styled.div`
  display: flex;
  flex: none;
  align-items: center;
  height: 33px;
  padding-left: 11px;
  border-bottom: 1px solid #4e9a06;
  background: #f2f1f0;
`;

const listColumns = "24px 26px 26px 370px 26px 298px 26px 210px 25px";

const ListHead = styled.div`
  display: grid;
  flex: none;
  grid-template-columns: ${listColumns};
  height: 25px;
  border-bottom: 1px solid #afaba6;
  background: linear-gradient(#fff, #efeeed);
`;

const HeadCell = styled.div`
  display: flex;
  align-items: center;
  justify-content: ${(p) => (p.$pl ? "space-between" : "center")};
  padding: 1px ${(p) => (p.$pl ? 10 : 0)}px 0 ${(p) => p.$pl || 0}px;
  border-right: 1px solid #d2d0cd;
`;

const ListRow = styled.div`
  display: grid;
  flex: none;
  grid-template-columns: ${listColumns};
  height: 20px;
  background: #e4e3e1;
  color: #1e1e1e;
`;

const Cell = styled.div`
  display: flex;
  align-items: center;
  justify-content: ${(p) => (p.$pl ? "flex-start" : "center")};
  padding: 1px 0 0 ${(p) => p.$pl || 0}px;
`;

const ReadDot = styled.span`
  width: 6px;
  height: 6px;
  border: 1px solid #949494;
  border-radius: 50%;
  background: #c0c0c0;
`;

const ListSpace = styled.div`
  flex: none;
  height: 192px;
  border-bottom: 1px solid #4e9a06;
  box-shadow: inset 0 -1px #afaba6;
  background: #fff;
`;

const MessageHead = styled.div`
  flex: none;
  height: 112px;
  padding-top: 2px;
  border-bottom: 1px solid #afaba6;
  background: #f2f1f0;
`;

const Actions = styled.div`
  display: flex;
  align-items: center;
  justify-content: flex-end;
  height: 27px;
  padding-right: 4px;
`;

const ActionButton = styled.div`
  display: flex;
  flex: none;
  align-items: center;
  width: ${(p) => p.$w}px;
  height: 27px;
  margin-left: ${(p) => p.$ml ?? 5}px;
  padding-left: 5px;
  border: 1px solid #b4b1ad;
  border-bottom-color: #979490;
  border-radius: 4px;
  background: linear-gradient(#fff, #ececeb);
`;

const HeadLine = styled.div`
  display: flex;
  align-items: center;
  height: ${(p) => p.$h}px;
  padding: 0 9px 0 6px;
`;

const FieldName = styled.div`
  display: flex;
  justify-content: flex-end;
  width: 34px;
  margin-right: 6px;
  color: #8f8f8f;
`;

const Push = styled.div`
  margin-left: auto;
`;

const MessageView = styled.div`
  display: flex;
  flex: 1;
  justify-content: space-between;
  min-height: 0;
  overflow: hidden;
  background: #f4f4f4;
  font-family: ${dejavu};
`;

const Card = styled.article`
  width: 600px;
  height: 400px;
  margin: 28px 0 0 209px;
  border: 1px solid #ddd;
  border-right-width: 2px;
  background: #fff;
`;

const CardHead = styled.div`
  display: flex;
  align-items: center;
  height: 39px;
  padding: 0 20px;
  border-bottom: 1px solid #f0f0f0;
  color: #707070;
  font-size: 14px;
`;

const CardTitle = styled.div`
  padding: 10px 20px 0;
  color: #111;
  font-size: 22px;
`;

const TitleLine = styled.div`
  display: flex;
  align-items: center;
  height: 27px;
`;

const Lozenge = styled.div`
  display: flex;
  align-items: center;
  width: 77px;
  height: 19px;
  margin-left: 5px;
  padding-left: 6px;
  border-radius: 3px;
  background: #14892c;
  color: #fff;
`;

const Comment = styled.div`
  height: 300px;
  margin: 20px 20px 0;
  padding: 10px 11px;
  border: 1px solid #9db7dc;
  border-radius: 3px;
  background: #eaf2fa;
  color: #111;
  font-size: 16px;
`;

const CommentLine = styled.div`
  display: flex;
  align-items: center;
  height: 18px;
`;

const Scrollbar = styled.div`
  display: flex;
  flex: none;
  flex-direction: column;
  align-items: center;
  justify-content: space-between;
  width: 13px;
  height: 262px;
  margin-right: 1px;
  padding: 6px 0;
  border: 1px solid #b5b2ae;
  border-radius: 6px;
  background: #dcdad7;
`;

const Thumb = styled.div`
  display: flex;
  flex: none;
  align-items: center;
  justify-content: center;
  width: 13px;
  height: 31px;
  margin: 4px 0 auto;
  border: 1px solid #9a9894;
  border-radius: 6px;
  background: #f6f5f4;
`;

const StatusBar = styled.footer`
  display: flex;
  flex: none;
  align-items: center;
  height: 23px;
  padding: 0 10px 0 2px;
  border-top: 1px solid #afaba6;
  background: #f2f1f0;
  color: #4c4c4c;
`;

const InboxIcon = ({ w = 16, ml }) => (
  <Svg $w={w} $ml={ml} viewBox="0 0 16 16">
    <path d="M2.500 5h11l2 5v5.500H.5V10z" fill="#f4f5f3" stroke="#85878a" />
    <path d="M1 11h3l1 2h6l1-2h3v4H1z" fill="#c9cbc9" stroke="#85878a" strokeWidth=".7" />
    <path d="M6 0h4v4h3L8 9.500 3 4h3z" fill="#8ae234" stroke="#4e9a06" strokeWidth=".9" />
  </Svg>
);

const EnvelopeIcon = ({ ml }) => (
  <Svg $w={15} $h={11} $ml={ml} viewBox="0 0 15 11">
    <rect x=".5" y=".5" width="14" height="10" fill="#f6e9df" stroke="#c79c83" />
    <path d="M2 2l5.500 4.500L13 2M2 9.500l4-4M13 9.500l-4-4" fill="none" stroke="#c07a58" />
  </Svg>
);

const Lens = ({ ml }) => (
  <Svg $w={16} $ml={ml} viewBox="0 0 16 16">
    <path d="M11 11l4 4" stroke="#3b3b3b" strokeWidth="3.200" />
    <circle cx="7" cy="7" r="5.500" fill="#dbe3f2" stroke="#2b3f8e" strokeWidth="2.600" />
    <circle cx="7" cy="7" r="5" fill="none" stroke="#8ca0d8" strokeWidth=".7" />
  </Svg>
);

const Star = ({ w = 15, ml, fill = "#fff", line = "#a5a5a5" }) => (
  <Svg $w={w} $ml={ml} viewBox="0 0 16 16">
    <path d="M8 .8l2.200 4.700 5 .6-3.700 3.500 1 5.200L8 12.300l-4.500 2.500 1-5.200L.8 6.100l5-.6z" fill={fill} stroke={line} strokeWidth="1.100" strokeLinejoin="round" />
  </Svg>
);

const TagIcon = ({ w, ml }) => (
  <Svg $w={w} $ml={ml} viewBox="0 0 20 20">
    <path d="M1 2q0-1 2-1l5 0q2 0 3 2l7 8q3 4 0 6t-6 1L3 10Q0 6 1 2z" fill="#fbfbfa" stroke="#8c8c8a" strokeWidth="1.100" />
    <circle cx="5" cy="5" r="1.900" fill="#eee" stroke="#777" /><path d="M9 7l5 6M6.500 9.500l5 4" stroke="#c6c6c3" />
  </Svg>
);

const ClipIcon = ({ w, ml }) => (
  <Svg $w={w} $ml={ml} viewBox="0 0 14 14">
    <path d="M9 4L4 9c-1 1 .3 2.300 1.300 1.300L11.500 4.500C13.500 2 11 0 9 2L2.500 8c-3 3 1 6.500 4 4L12 7" fill="none" stroke="#5a5a5a" strokeWidth="1.200" />
  </Svg>
);

const BinIcon = ({ ml }) => (
  <Svg $w={16} $ml={ml} viewBox="0 0 16 16">
    <path d="M2 5h12v10.500H2z" fill="#87953d" stroke="#525c1c" /><path d="M.5 1.500h15v3.500H.5z" fill="#e6e8e0" stroke="#4b4e40" />
    <circle cx="8" cy="10.200" r="2.600" fill="none" stroke="#dce5b5" strokeWidth="1.200" strokeDasharray="3.500 1.800" />
  </Svg>
);

const FlameIcon = ({ w = 10, ml }) => (
  <Svg $w={w} $h={w * 1.2} $ml={ml} viewBox="0 0 10 12">
    <path d="M4 0v4q0 2 1.500 2T6.500 3q3.500 2 3 5-.5 4-4.500 4T.4 8.500Q0 5 2 3l.5 1.500Q4 3 4 0z" fill="#4c4c4c" />
  </Svg>
);

const Twisty = ({ open }) => (
  <Svg $w={8} viewBox="0 0 8 8"><path d={open ? "M.5 1h7L4 7.500z" : "M1 .5v7L7 4z"} fill="#8b8b8b" stroke="#3c3c3c" /></Svg>
);

const accountIcon = (
  <Svg $w={16} $ml={3} viewBox="0 0 16 16">
    <rect x=".5" y="2.500" width="14" height="11" fill="#f7f7f7" stroke="#aaa" /><path d="M1 3l6 6 6-6" fill="none" stroke="#bbb" />
    <path d="M9.500 9V6.500a2.500 2.500 0 0 1 5 0V9" fill="none" stroke="#9a8a4a" strokeWidth="1.200" /><rect x="8" y="8" width="8" height="6.500" fill="#f1c232" stroke="#b8860b" strokeWidth=".8" />
  </Svg>
);

const draftIcon = (
  <Svg $w={16} viewBox="0 0 16 16"><rect x="1.500" y=".5" width="12" height="14" rx="1" fill="#fbfbfb" stroke="#999" /><path d="M4 4h7M4 6.500h5M4 9h6M4 11.500h4" stroke="#bbb" /></Svg>
);

const sentIcon = (
  <Svg $w={16} viewBox="0 0 16 16"><rect x="1" y="1" width="14" height="14" fill="#fff" stroke="#888" strokeDasharray="2 1.300" /><rect x="3" y="3" width="10" height="10" fill="#5b8ccf" /><circle cx="8" cy="8" r="2.500" fill="none" stroke="#d8e6f7" /></Svg>
);

const spamIcon = (
  <Svg $w={16} viewBox="0 0 16 16"><path d="M1 2h5l1 2h7v10H1z" fill="#f5f5f5" stroke="#999" /><path d="M2 5h13.500v9.500H2z" fill="#e9622c" stroke="#c04a17" strokeWidth=".8" /><path d="M3 6h11.500v3H3z" fill="#f49a6e" /></Svg>
);

const computerIcon = (
  <Svg $w={15} $ml={3} viewBox="0 0 15 16"><rect x="2.500" y=".8" width="9.500" height="8.500" fill="#27477f" stroke="#999" strokeWidth="1.500" /><path d="M1 11.500h13v3.500H1z" fill="#dedede" stroke="#888" /><path d="M3 13h9" stroke="#888" /></Svg>
);

const MailTop = () => (
  <>
    <MailTabs>
      <MailTabActive>
        <MailTabShape viewBox="0 0 250 28"><path d="M0 27.500C16 27 11 0 25 0H212C226 0 224 27 250 27.500V28H0z" fill="#f7f6f5" /></MailTabShape>
        <InboxIcon /><Text w={108} ml={7}>Courrier entrant</Text>
      </MailTabActive>
      <EnvelopeIcon />
      <Text w={141} ml={6}>Compte générique …</Text>
      <Svg $w={8} $ml={17} viewBox="0 0 8 8"><path d="M0 2l2-2 2 2 2-2 2 2v6H0z" fill="#5c5b56" /></Svg>
      <Divider $h={26} $ml={13} $c="#77756f" />
      <EnvelopeIcon ml={9} />
      <Text w={139} ml={6}>Procédure: Change…</Text>
      <Svg $w={8} $ml={18} viewBox="0 0 8 8"><path d="M0 2l2-2 2 2 2-2 2 2v6H0z" fill="#5c5b56" /></Svg>
      <Svg $w={16} $ml={620} viewBox="0 0 16 16">
        <rect width="16" height="16" fill="#f1f5fb" /><path d="M0 1.500h16" stroke="#7ba0d6" strokeWidth="3" />
        <path d="M5.500 0v16M10.500 0v16M0 6h16M0 11h16" stroke="#a9bfe0" /><path d="M10 5h6v5h-6z" fill="#2f6cc0" /><path d="M0 9h5v4H0z" fill="#d2a23f" />
      </Svg>
      <Svg $w={14} $h={16} $ml={13} viewBox="0 0 14 16">
        <rect x=".7" y="1.700" width="12.600" height="13.600" rx="1" fill="#d8a77c" stroke="#8f6239" /><path d="M3 4h8v9.500H3z" fill="#fff" /><path d="M4 0h6v4H4z" fill="#c9cdd0" />
        <path d="M4 6.500l1 1 2-2M4 10.500l1 1 2-2" fill="none" stroke="#1c9a3b" strokeWidth="1.200" />
      </Svg>
    </MailTabs>
    <MailToolbar>
      <InboxIcon w={20} /><Text w={50} ml={4}>Relever</Text><Arrow ml={13} />
      <Svg $w={20} $ml={15} viewBox="0 0 20 20"><rect x="1" y="1" width="15" height="18" fill="#fbfbfb" stroke="#999" /><path d="M3 5h10M3 8h8M3 11h6" stroke="#ccc" /><path d="M9 17l1-4L17 1l3 2-7 12z" fill="#f3953b" stroke="#a65a12" strokeWidth=".8" /></Svg>
      <Text w={38} ml={4}>Écrire</Text><Arrow ml={13} />
      <Svg $w={20} $ml={15} viewBox="0 0 20 20"><path d="M3 1h14q2 0 2 2v10q0 2-2 2H9l-4.500 4V15H3q-2 0-2-2V3q0-2 2-2z" fill="#fff" stroke="#777" strokeWidth="1.200" /><path d="M4 6h9M4 9h6" stroke="#444" strokeWidth="1.200" /></Svg>
      <Text w={31} ml={3}>Chat</Text>
      <Svg $w={20} $ml={14} viewBox="0 0 20 20"><rect x="1" y=".8" width="16" height="18.400" rx="1.500" fill="#7f9ecb" stroke="#3d5f96" /><path d="M4 1v15h13" fill="none" stroke="#5478ad" /><circle cx="10.500" cy="8" r="4" fill="none" stroke="#b67ea6" strokeWidth="1.500" /><circle cx="10.500" cy="8" r="1.300" fill="#b67ea6" /><path d="M17.500 1H20v4.500h-2.500z" fill="#e9c21a" /><path d="M17.500 5.500H20V10h-2.500z" fill="#35a02a" /><path d="M17.500 10H20v4.500h-2.500z" fill="#d22" /></Svg>
      <Text w={61} ml={4}>Adresses</Text>
      <Divider $h={20} $ml={13} />
      <TagIcon w={20} ml={13} /><Text w={62} ml={4}>Étiquette</Text><Arrow ml={5} />
      <Pressed $w={111} $h={34} $ml={10}><Lens ml={-1} /><Text w={83} ml={2}>Filtre rapide</Text></Pressed>
      <Field $w={449} $h={25} $ml={195} $pl={7} $r={3}><Text w={150}>Rechercher… &lt;Ctrl+K&gt;</Text><Lens ml={271} /></Field>
      <Svg $w={16} $h={13} $ml={16} viewBox="0 0 16 13"><path d="M0 1.500h16M0 6.500h16M0 11.500h16" stroke="#3d4b5c" strokeWidth="2.800" /></Svg>
    </MailToolbar>
  </>
);

const FolderTree = () => (
  <Tree>
    <TreeRow $pl={1}><Twisty open />{accountIcon}<Text w={224} ml={4} b>philippe.benoit@fastconnect.fr</Text></TreeRow>
    <TreeRow $pl={19} $selected><Twisty open /><InboxIcon ml={3} /><Text w={109} ml={4}>Courrier entrant</Text></TreeRow>
    <TreeRow $pl={48}><BinIcon /><Text w={61} ml={4}>Corbeille</Text></TreeRow>
    <TreeRow $pl={30}>{draftIcon}<Text w={67} ml={4}>Brouillons</Text></TreeRow>
    <TreeRow $pl={30}>{sentIcon}<Text w={53} ml={4}>Envoyés</Text></TreeRow>
    <TreeRow $pl={30}><BinIcon /><Text w={61} ml={4}>Corbeille</Text></TreeRow>
    <TreeRow $pl={30}>{spamIcon}<Text w={37} ml={4}>Spam</Text></TreeRow>
    <TreeRow $pl={1}><Twisty />{computerIcon}<Text w={110} ml={5} b>Dossiers locaux</Text></TreeRow>
  </Tree>
);

const QuickFilter = () => (
  <FilterBar>
    <Svg $w={14} viewBox="0 0 14 14"><path d="M1 3l4-3 2 4 4 1-1 3 4 6-6-4-3 2-1-5-4-1z" fill="#5a5a5a" /></Svg>
    <Divider $h={18} $ml={14} />
    <Pressed $w={78} $h={27} $ml={5}>
      <Svg $w={14} $h={8} viewBox="0 0 14 8"><circle cx="3.500" cy="4" r="3" fill="#dce6f2" stroke="#8b8b8b" /><circle cx="10.500" cy="4" r="3" fill="#dce6f2" stroke="#8b8b8b" /></Svg>
      <Text w={49} ml={4}>Non lus</Text>
    </Pressed>
    <Star ml={8} fill="#f7eb8a" line="#c9a60a" /><Text w={37} ml={2}>Suivis</Text>
    <Svg $w={13} $h={14} $ml={14} viewBox="0 0 13 14"><circle cx="6.500" cy="4" r="3.500" fill="#ddd" stroke="#777" /><path d="M.8 13.500q0-5 4-5.500h3.500q4 .5 4 5.500z" fill="#b5b5b5" stroke="#777" /></Svg>
    <Text w={59} ml={4}>Contacts</Text>
    <TagIcon w={13} ml={15} /><Text w={69} ml={3}>Étiquettes</Text>
    <ClipIcon w={14} ml={13} /><Text w={91} ml={4}>Pièces jointes</Text>
    <Text w={69} ml={77} c="#4e9a06">1 message</Text>
    <Field $w={373} $h={26} $ml={10} $pl={6} $r={3}><Text w={252}>Filtrer ces messages… &lt;Ctrl+Shift+K&gt;</Text><Lens ml={94} /></Field>
  </FilterBar>
);

const MessageList = () => (
  <>
    <ListHead>
      <HeadCell><Svg $w={6} $h={10} viewBox="0 0 6 10"><path d="M0 .5h2.500v8H6M2.500 5H6" fill="none" stroke="#4c4c4c" strokeWidth="1.200" /></Svg></HeadCell>
      <HeadCell><Star w={10} fill="#4c4c4c" line="#4c4c4c" /></HeadCell>
      <HeadCell><ClipIcon w={10} /></HeadCell>
      <HeadCell $pl={31}><Text w={34}>Sujet</Text></HeadCell>
      <HeadCell><Svg $w={11} $h={5} viewBox="0 0 11 5"><circle cx="2.500" cy="2.500" r="1.800" fill="#999" stroke="#4c4c4c" /><circle cx="8.500" cy="2.500" r="1.800" fill="#999" stroke="#4c4c4c" /></Svg></HeadCell>
      <HeadCell $pl={7}><Text w={73}>Expéditeur</Text></HeadCell>
      <HeadCell><FlameIcon w={9} /></HeadCell>
      <HeadCell $pl={8}><Text w={32}>Date</Text><Arrow /></HeadCell>
      <HeadCell><Svg $w={10} viewBox="0 0 10 10"><path d="M.5.500h8v5M.5.500v7h4M.5 3h8M4.500.500v7" fill="none" stroke="#4c4c4c" /><path d="M5 6.500h5L7.500 10z" fill="#4c4c4c" /></Svg></HeadCell>
    </ListHead>
    <ListRow>
      <Cell /><Cell><Star w={12} fill="none" line="#bdbcba" /></Cell><Cell />
      <Cell $pl={31}><Text w={336}>[JIRA] [HSS Support] Impossible de connecter un…</Text></Cell>
      <Cell><ReadDot /></Cell>
      <Cell $pl={7}><Text w={132}>LEMORDANT Pierre</Text></Cell>
      <Cell><ReadDot /></Cell>
      <Cell $pl={8}><Text w={35}>11:47</Text></Cell>
      <Cell />
    </ListRow>
    <ListSpace />
  </>
);

const Message = () => (
  <>
    <MessageHead>
      <Actions>
        <ActionButton $w={96}><Glyph $w={14} $s={12}><FaReply /></Glyph><Text w={65} ml={5}>Répondre</Text></ActionButton>
        <ActionButton $w={140}><Glyph $w={14} $s={15}><FaReplyAll /></Glyph><Text w={109} ml={5}>Répondre à tous</Text></ActionButton>
        <Arrow ml={6} />
        <ActionButton $w={100} $ml={10}>
          <Svg $w={14} $h={10} viewBox="0 0 14 10"><path d="M0 3.500h8V0l6 5-6 5V6.500H0z" fill="#4c4c4c" /></Svg>
          <Text w={69} ml={5}>Transférer</Text>
        </ActionButton>
        <ActionButton $w={86}>
          <Svg $w={12} $h={13} $ml={1} viewBox="0 0 12 13"><path d="M1.500.700h9M0 3h12" stroke="#4c4c4c" strokeWidth="1.300" /><path d="M0 5h12v8H0z" fill="#4c4c4c" /><path d="M1 5.500l5 4 5-4" fill="none" stroke="#fff" strokeWidth="1.500" /></Svg>
          <Text w={55} ml={6}>Archiver</Text>
        </ActionButton>
        <ActionButton $w={105}><FlameIcon ml={2} /><Text w={75} ml={7}>Indésirable</Text></ActionButton>
        <ActionButton $w={101}><Glyph $w={12} $ml={1}><FaBan /></Glyph><Text w={70} ml={6}>Supprimer</Text></ActionButton>
        <ActionButton $w={74}><Text w={44} ml={3}>Autres</Text><Arrow ml={4} /></ActionButton>
      </Actions>
      <HeadLine $h={28}><FieldName><Text w={18}>De</Text></FieldName><Text w={312}>LEMORDANT Pierre &lt;noreply@fastconnect.fr&gt;</Text><Star ml={1} /></HeadLine>
      <HeadLine $h={25}>
        <FieldName><Text w={34}>Sujet</Text></FieldName>
        <Text w={845} b>[JIRA] [HSS Support] Impossible de connecter un cluster MapR depuis un client situé dans un autre VLAN [HSSSUP-27]</Text>
        <Push><Text w={35}>11:47</Text></Push>
      </HeadLine>
      <HeadLine $h={29}><FieldName><Text w={32}>Pour</Text></FieldName><Text w={190}>support-a4c@fastconnect.fr</Text><Star ml={1} fill="#fcd53f" line="#d9a414" /></HeadLine>
    </MessageHead>
    <MessageView>
      <Card>
        <CardHead>
          <Text w={99} b>HSS Support</Text><Text w={54} ml={5}>- Bogue</Text>
          <Push><Text w={77}>Référence:</Text></Push><Text w={86} ml={5} b>HSSSUP-27</Text>
        </CardHead>
        <CardTitle>
          <TitleLine><Text w={519} b>Impossible de connecter un cluster MapR</Text></TitleLine>
          <TitleLine><Text w={532} b>depuis un client situé dans un autre VLAN</Text></TitleLine>
          <Lozenge><Text w={64} s={14} b>FERMÉE</Text></Lozenge>
        </CardTitle>
        <Comment>
          <CommentLine><Text w={154} s={14} b>LEMORDANT Pierre</Text><Text w={131} ml={10} s={12} c="#707070">Aujourd'hui 11:46 AM</Text></CommentLine>
          <CommentLine><Text w={66}>Bonjour,</Text></CommentLine>
          <CommentLine />
          <CommentLine><Text w={341}>Comme vu en call, nous fermons ce ticket.</Text></CommentLine>
          <CommentLine><Text w={523}>Il pourra être réouvert si un problème se présente lors de la mise</Text></CommentLine>
        </Comment>
      </Card>
      <Scrollbar>
        <Svg $w={6} $h={4} viewBox="0 0 6 4"><path d="M0 4h6L3 0z" fill="#aaa" /></Svg>
        <Thumb><Svg $w={4} $h={7} viewBox="0 0 4 7"><path d="M0 .5h4M0 3.500h4M0 6.500h4" stroke="#999" /></Svg></Thumb>
        <Svg $w={6} $h={4} viewBox="0 0 6 4"><path d="M0 0h6L3 4z" fill="#666" /></Svg>
      </Scrollbar>
    </MessageView>
  </>
);

const MailStatus = () => (
  <StatusBar>
    <Svg $w={16} viewBox="0 0 16 16">
      <rect x="6.500" y=".6" width="9" height="7.500" fill="#3d6ab0" stroke="#e8e8e4" strokeWidth="1.600" /><path d="M7 10.500h9" stroke="#888" strokeWidth="2" />
      <rect x="1" y="4.600" width="9" height="7" fill="#3d6ab0" stroke="#8a8a84" strokeWidth="1.400" /><path d="M.5 14.500h10" stroke="#888" strokeWidth="2.500" />
    </Svg>
    <Text w={68} ml={897}>Non lus : 0</Text>
    <Text w={75} ml={19}>Total : 7541</Text>
    <Svg $w={16} $ml={17} viewBox="0 0 16 16">
      <rect x=".7" y="1.700" width="14.600" height="13.600" fill="#fff" stroke="#204a87" strokeWidth="1.400" /><path d="M1 3h14" stroke="#4a76b8" strokeWidth="2" /><path d="M4 0v4M12 0v4" stroke="#999" strokeWidth="1.500" />
      <text x="8" y="13.500" textAnchor="middle" fontFamily="Roboto, sans-serif" fontWeight="700" fontSize="10" fill="#1a1aa0">10</text>
    </Svg>
    <Text w={157} ml={6}>Panneau « Aujourd'hui »</Text>
    <Svg $w={10} $h={6} $ml={8} viewBox="0 0 10 6"><path d="M1 5.500L5 1.500l4 4" fill="none" stroke="#222" strokeWidth="2.200" /></Svg>
  </StatusBar>
);

const leftPips = { 1: "solid", 3: "open", 4: "solid", 6: "many", 7: "solid", 8: "solid", 10: "solid", 12: "solid" };
const rightPips = { 1: "open", 3: "solid", 4: "open", 6: "open", 7: "open", 8: "open", 10: "open" };

export default function App() {
  return (
    <>
      <GlobalStyle />
      <Desktop>
        <Screen $h={1080}>
          <Panel title="ALIEN 4 Cloud - Mozilla Firefox" />
          <ScreenBody>
            <Launcher pips={leftPips} />
            <Window>
              <BrowserTabs />
              <BrowserToolbar />
              <WebApp />
            </Window>
          </ScreenBody>
        </Screen>
        <Screen $h={768}>
          <Panel />
          <ScreenBody>
            <Launcher pips={rightPips} folded />
            <Window>
              <MailTop />
              <MailBody>
                <FolderTree />
                <MailPane>
                  <QuickFilter />
                  <MessageList />
                  <Message />
                </MailPane>
              </MailBody>
              <MailStatus />
            </Window>
          </ScreenBody>
        </Screen>
      </Desktop>
    </>
  );
}
